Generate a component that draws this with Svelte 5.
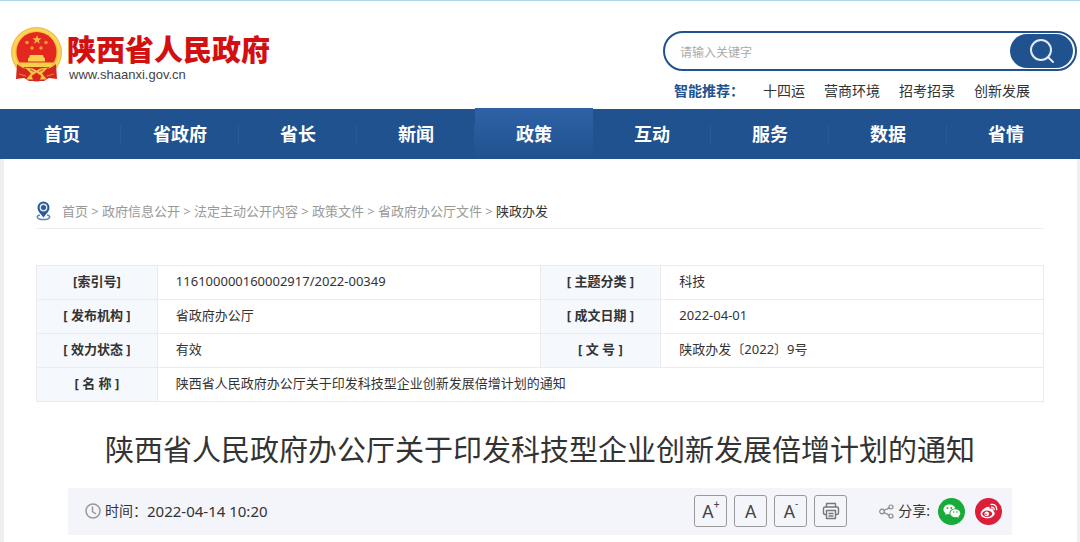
<script>
  const nav = ['首页', '省政府', '省长', '新闻', '政策', '互动', '服务', '数据', '省情'];
  const hot = ['十四运', '营商环境', '招考招录', '创新发展'];
  const crumbs = ['首页', '政府信息公开', '法定主动公开内容', '政策文件', '省政府办公厅文件'];
  const rows = [
    ['[索引号]', '116100000160002917/2022-00349', '[ 主题分类 ]', '科技'],
    ['[ 发布机构 ]', '省政府办公厅', '[ 成文日期 ]', '2022-04-01'],
    ['[ 效力状态 ]', '有效', '[ 文 号 ]', '陕政办发〔2022〕9号']
  ];
</script>

<div class="page">
  <header>
    <a class="brand" href="#home">
      <svg class="emblem" viewBox="0 0 51 55" aria-hidden="true">
        <circle cx="25.500" cy="25.500" r="25.500" fill="#f3bb3f" />
        <circle cx="25.500" cy="25.500" r="22.800" fill="none" stroke="#fbd45c" stroke-width="3" />
        <circle cx="25.500" cy="25" r="20" fill="#e5281f" />
        <path d="M26 8l1.200 3.300h3.400l-2.800 2.100 1 3.300-2.800-2-2.900 2 1-3.300-2.700-2.100h3.400z" fill="#f0b840" />
        <g fill="#f0a03a"><circle cx="16" cy="15.500" r="1.700" /><circle cx="35" cy="15.500" r="1.700" /><circle cx="21" cy="21" r="1.700" /><circle cx="30" cy="21" r="1.700" /></g>
        <path d="M19 28h13l1 3H18zM17 31h17v3.500H17z" fill="#f8cf4c" />
        <path d="M8 35.500h35l-3 4.500H11z" fill="#f8cf4c" />
        <path d="M6 37q8 7 14 5l5.500-1.500L31 42q6 2 14-5l1 15-8-1-5 3H18l-5-3-8 1z" fill="#d7261d" />
        <path d="M14 40.500l8 1 3.500 2 3.500-2 8-1-6 6 5 6H15l5-6z" fill="#f6c045" />
        <path d="M21 49l4.500-3 4.500 3-2 5h-5zM19 42.500l4 2M32 42.500l-4 2" fill="#d7261d" stroke="#d7261d" stroke-width=".8" />
        <path d="M8 47l7 2M43 47l-7 2" stroke="#e98732" />
      </svg>
      <span class="brand-text"><strong>陕西省人民政府</strong><small>www.shaanxi.gov.cn</small></span>
    </a>
    <div class="finder">
      <form class="search">
        <input type="text" placeholder="请输入关键字" aria-label="请输入关键字" />
        <button type="button" aria-label="搜索">
          <svg width="26" height="26" viewBox="0 0 26 26" fill="none" stroke="#e4ebf3" stroke-width="2"><circle cx="12" cy="12" r="10" /><path d="M19 19l5 5" stroke-linecap="round" /></svg>
        </button>
      </form>
      <div class="hot">
        <b>智能推荐：</b>
        {#each hot as item}<a href="#hot">{item}</a>{/each}
      </div>
    </div>
  </header>

  <nav>
    {#each nav as item}
      <a href="#nav" class:active={item === '政策'}>{item}</a>
    {/each}
  </nav>

  <main>
    <div class="crumbs">
      <svg width="15" height="20" viewBox="0 0 15 20" fill="none">
        <path d="M4 14C0 14.500 0 18.500 7.500 18.500S15 14.500 11 14" stroke="#5c86b8" stroke-width="1.600" />
        <path d="M7.500 16.500C5 13 1.500 10.500 1.500 6.500a6 6 0 0 1 12 0C13.500 10.500 10 13 7.500 16.500Z" fill="#2b5b98" />
        <circle cx="7.500" cy="6.500" r="3.200" fill="#2b5b98" stroke="#dfe8f2" stroke-width="1.400" />
      </svg>
      {#each crumbs as item}<a href="#crumb">{item}</a><i>&gt;</i>{/each}<span>陕政办发</span>
    </div>

    <table>
      <tbody>
        {#each rows as [k1, v1, k2, v2]}
          <tr><th scope="row">{k1}</th><td>{v1}</td><th scope="row">{k2}</th><td>{v2}</td></tr>
        {/each}
        <tr><th scope="row">[ 名 称 ]</th><td colspan="3">陕西省人民政府办公厅关于印发科技型企业创新发展倍增计划的通知</td></tr>
      </tbody>
    </table>

    <h1>陕西省人民政府办公厅关于印发科技型企业创新发展倍增计划的通知</h1>

    <div class="meta">
      <svg width="16" height="16" viewBox="0 0 16 16" fill="none" stroke="#999" stroke-width="1.500"><circle cx="8" cy="8" r="7" /><path d="M7.500 3.500V8.500L11 11" /></svg>
      <span class="label">时间：</span><time datetime="2022-04-14T10:20">2022-04-14 10:20</time>
      <div class="tools">
        <button type="button">A<sup>+</sup></button>
        <button type="button">A</button>
        <button type="button">A<sup>-</sup></button>
        <button type="button" aria-label="打印">
          <svg width="18" height="18" viewBox="0 0 18 18" fill="none" stroke="#777" stroke-width="1.400" stroke-linejoin="round"><path d="M4.500 5V1.500h9V5M4 12.500H3Q1.500 12.500 1.500 11V6.500Q1.500 5 3 5h12q1.500 0 1.500 1.500V11q0 1.500-1.500 1.500H14" /><path d="M4.500 8.500h9v8h-9zM6.500 11.500h5M6.500 14h5" /></svg>
        </button>
      </div>
      <div class="share">
        <svg width="15" height="15" viewBox="0 0 15 15" fill="none" stroke="#888" stroke-width="1.200"><circle cx="3" cy="7.500" r="2.300" /><circle cx="12" cy="3" r="2" /><circle cx="12" cy="12" r="2" /><path d="M5 6.500L10.200 3.900M5 8.500L10.200 11.100" /></svg>
        <span>分享:</span>
        <a href="#wechat" aria-label="微信">
          <svg width="27" height="27" viewBox="0 0 27 27"><circle cx="13.500" cy="13.500" r="13.500" fill="#17ab39" /><path d="M11.500 6.500c-3.600 0-6 2.200-6 4.900 0 1.600.8 2.900 2.200 3.800l-.5 1.900 2.200-1.200c.7.200 1.400.3 2.100.3-.6-3.500 2.400-5.700 5.900-5.700-.4-2.300-2.800-4-5.900-4Z" fill="#fff" /><path d="M17.300 11.200c-3 0-5 1.800-5 4.100 0 2.200 2 4 5 4 .6 0 1.200-.1 1.700-.3l1.800 1-.4-1.600c1.200-.7 1.900-1.800 1.900-3.100 0-2.300-2.100-4.100-5-4.100Z" fill="#fff" /><g fill="#17ab39"><circle cx="9.500" cy="10" r=".9" /><circle cx="13.300" cy="10" r=".9" /><circle cx="15.700" cy="14" r=".7" /><circle cx="18.900" cy="14" r=".7" /></g></svg>
        </a>
        <a href="#weibo" aria-label="微博">
          <svg width="27" height="27" viewBox="0 0 27 27"><circle cx="13.500" cy="13.500" r="13.500" fill="#dc1e38" /><path d="M18 12.700c.8-2-.8-2.800-3.500-1.700.8-2-.7-2.900-3.200-1.700-3 1.400-5.700 4.200-5.700 6.700 0 2.600 3.200 4.200 6.500 4.200 4.200 0 7.600-2.400 7.600-4.800 0-1.400-.8-2.300-1.700-2.700Z" fill="#fff" /><ellipse cx="12.200" cy="15.700" rx="5" ry="3.200" fill="#dc1e38" /><circle cx="11.700" cy="15.900" r="2.300" fill="#fff" /><circle cx="11" cy="16.300" r=".8" fill="#dc1e38" /><path d="M16.500 9.200q2.800-.3 2.600 2.600M16 6.500q5.800-.8 5.700 5.200" fill="none" stroke="#fff" stroke-width="1.300" stroke-linecap="round" /></svg>
        </a>
      </div>
    </div>
  </main>
</div>

<style>
  :global(body) { background: #efefef; }
  .page { font-family: "Noto Sans", "Noto Sans CJK SC", sans-serif; color: #333; font-size: 13px; line-height: 20px; }
  a { color: inherit; text-decoration: none; }
  svg { flex: none; display: block; }
  header { display: flex; justify-content: space-between; background: #fff; border-top: 1px solid #add8e6; padding: 0 3px 7px 11px; }
  .brand { display: flex; align-items: flex-start; gap: 5px; padding-top: 26px; }
  .emblem { width: 51px; height: 55px; }
  .brand-text { display: flex; flex-direction: column; padding-top: 6px; }
  .brand strong { color: #d2100f; font-size: 29px; line-height: 34px; font-weight: 900; }
  .brand small { font: 13px/16px "Liberation Sans", sans-serif; color: #444; padding-left: 2px; }
  .finder { width: 414px; padding-top: 30px; }
  .search { display: flex; height: 40px; box-sizing: border-box; border: 2px solid #20528f; border-radius: 20px; padding: 1px 2px 1px 1px; }
  .search input { flex: 1; min-width: 0; border: 0; outline: 0; background: none; padding: 0 14px; font: 12px "Noto Sans CJK SC", sans-serif; }
  .search input::placeholder { color: #aaa; }
  .search button { width: 63px; border: 0; border-radius: 17px; background: #20528f; display: grid; place-items: center; padding: 0; }
  .hot { display: flex; gap: 19px; font-size: 14px; padding: 10px 0 0 11px; }
  .hot b { color: #20528f; }
  nav { display: flex; height: 50px; background: #20528f; border-top: 1px solid #fff; background-clip: padding-box; padding: 0 15px 0 3px; }
  nav a { flex: 1; display: grid; place-items: center; color: #fff; font-size: 18px; font-weight: 700; background: linear-gradient(#2b5b96, #2b5b96) right center / 1px 18px no-repeat; }
  nav a:last-child { background: none; }
  nav a.active { background: linear-gradient(#2e62a6, #20528f); margin-top: -1px; }
  main { background: #fff; margin: 0 3px 0 4px; padding: 35px 33px 24px 32px; }
  .crumbs { display: flex; align-items: center; height: 33px; border-bottom: 1px solid #eee; padding-bottom: 1px; color: #999; }
  .crumbs svg { margin-right: 11px; }
  .crumbs i { font-style: normal; width: 14px; text-align: center; }
  .crumbs span { color: #333; }
  table { width: 100%; table-layout: fixed; border-collapse: collapse; margin-top: 36px; }
  th, td { border: 1px solid #ebebeb; height: 34px; padding: 0 0 3px; box-sizing: border-box; }
  th { width: 12%; background: #f5f9fd; }
  td { padding-left: 18px; }
  h1 { margin: 27px 0 17px; text-align: center; font-size: 29px; line-height: 42px; font-weight: 400; }
  .meta { display: flex; align-items: center; height: 46px; margin: 0 32px; background: #f4f5fb; padding: 0 10px 1px 17px; font-size: 14px; box-sizing: content-box; }
  .meta .label { margin-left: 4px; }
  time { font-size: 15px; }
  .tools { display: flex; gap: 7px; margin-left: auto; }
  .tools button { width: 33px; height: 32px; box-sizing: border-box; border: 1px solid #999; border-radius: 3px; background: none; color: #444; display: flex; align-items: center; justify-content: center; padding: 0; font: 18px Roboto, sans-serif; }
  .tools sup { font-size: 10px; line-height: 10px; align-self: flex-start; padding-top: 4px; }
  .share { display: flex; align-items: center; margin-left: 32px; }
  .share span { margin: 0 8px 0 4px; }
  .share a + a { margin-left: 10px; }
</style>
